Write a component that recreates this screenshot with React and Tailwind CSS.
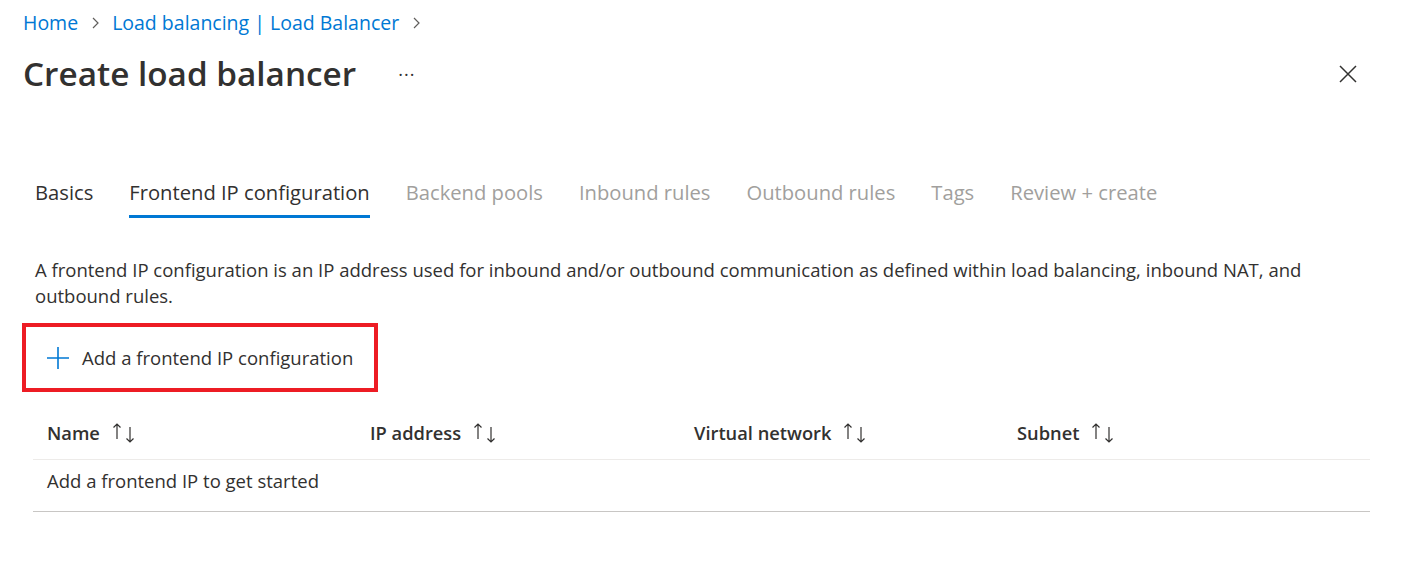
import React from "react";

const font = { fontFamily: '"Segoe UI", "Open Sans", "Liberation Sans", sans-serif' };

const tabs = [
  { label: "Basics", state: "done" },
  { label: "Frontend IP configuration", state: "active" },
  { label: "Backend pools", state: "off" },
  { label: "Inbound rules", state: "off" },
  { label: "Outbound rules", state: "off" },
  { label: "Tags", state: "off" },
  { label: "Review + create", state: "off" },
];

const columns = ["Name", "IP address", "Virtual network", "Subnet"];

const Chevron = () => (
  <svg width="10" height="16" viewBox="0 0 10 16" className="mx-[12px]">
    <path d="M3 3l5 5-5 5" fill="none" stroke="#605e5c" strokeWidth="1.2" />
  </svg>
);

const SortArrows = () => (
  <svg width="26" height="22" viewBox="0 0 26 22" className="ml-[11px]">
    <g fill="none" stroke="#323130" strokeWidth="1.2">
      <path d="M6 17V2M2.5 5.5L6 2l3.5 3.5" />
      <path d="M19 5v15M15.5 16.5L19 20l3.5-3.5" />
    </g>
  </svg>
);

export default function App() {
  return (
    <div className="min-h-screen bg-white text-[#323130]" style={font}>
      {/* Breadcrumb */}
      <div className="flex items-center pl-[23px] pt-[12px] h-[33px] text-[19.5px] text-[#0078d4]">
        <span>Home</span>
        <Chevron />
        <span>Load balancing | Load Balancer</span>
        <Chevron />
      </div>

      {/* Title row */}
      <div className="flex items-center justify-between pl-[23px] pr-[66px] mt-[20px] h-[42px]">
        <div className="flex items-center">
          <h1 className="text-[33.3px] font-semibold leading-none">Create load balancer</h1>
          <span className="ml-[42px] text-[18px] text-[#323130] tracking-[1px] leading-none">···</span>
        </div>
        <svg width="18" height="18" viewBox="0 0 18 18">
          <path d="M1 1l16 16M17 1L1 17" stroke="#323130" strokeWidth="1.5" />
        </svg>
      </div>

      {/* Tabs */}
      <div className="flex pl-[35px] mt-[81px] gap-[36px] text-[20.2px]">
        {tabs.map((t) => (
          <div
            key={t.label}
            className={`h-[42px] flex items-start pt-[1px] ${
              t.state === "active" ? "border-b-[3px] border-[#0078d4] text-[#323130]" : ""
            } ${t.state === "off" ? "text-[#a19f9d]" : ""}`}
          >
            {t.label}
          </div>
        ))}
      </div>

      {/* Description */}
      <p className="pl-[35px] pr-[100px] mt-[39px] text-[18.5px] leading-[26px]">
        A frontend IP configuration is an IP address used for inbound and/or outbound communication as defined
        within load balancing, inbound NAT, and outbound rules.
      </p>

      {/* Add button with highlight */}
      <div className="pl-[22px] mt-[14px]">
        <div className="w-[356px] h-[69px] border-[4px] border-[#ed1c24] flex items-center pl-[21px]">
          <svg width="22" height="22" viewBox="0 0 22 22">
            <path d="M11 0v22M0 11h22" stroke="#0078d4" strokeWidth="1.6" />
          </svg>
          <span className="ml-[13px] text-[18.5px]">Add a frontend IP configuration</span>
        </div>
      </div>

      {/* Table */}
      <div className="ml-[33px] mr-[53px] mt-[14px]">
        <div className="grid grid-cols-[323px_324px_323px_1fr] h-[54px] border-b border-[#edebe9]">
          {columns.map((c) => (
            <div key={c} className="flex items-center pl-[14px] text-[18.3px] font-semibold">
              {c}
              <SortArrows />
            </div>
          ))}
        </div>
        <div className="h-[52px] flex items-center pl-[14px] pb-[10px] text-[18.5px] border-b border-[#c8c6c4]">
          Add a frontend IP to get started
        </div>
      </div>
    </div>
  );
}
